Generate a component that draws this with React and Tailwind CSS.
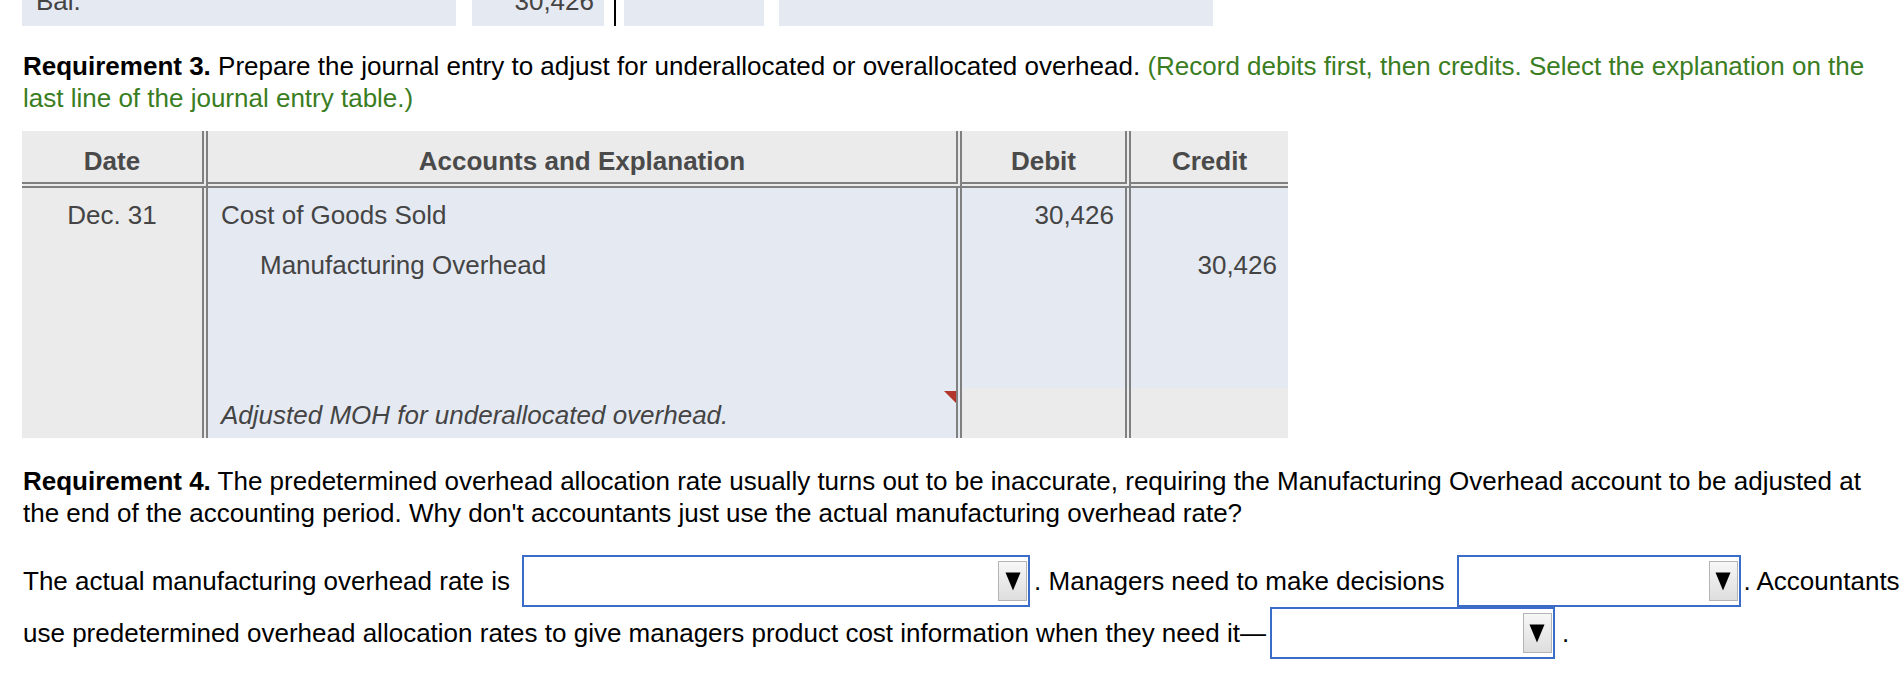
import React from "react";

const Dropdown = ({ width }) => (
  <div
    className={`${width} h-[52px] shrink-0 border-2 border-[#3b6cc7] bg-white flex items-center justify-end pr-[1px]`}
  >
    <div className="w-[29px] h-[40px] border border-[#b4b4b4] bg-gradient-to-b from-[#f7f7f7] to-[#dedede] flex items-center justify-center">
      <svg width="16" height="19" viewBox="0 0 16 19">
        <polygon points="0.5,0.5 15.5,0.5 8,18.5" fill="#000" />
      </svg>
    </div>
  </div>
);

const cellR = "border-r-[6px] border-double border-[#808080]";
const head = "border-b-[6px] border-double border-[#808080] bg-[#ebebeb] h-[57px] pt-[14px] text-center font-bold text-[#4a4a4a]";

const App = () => {
  return (
    <div className="w-[1902px] h-[694px] overflow-hidden bg-white font-['Liberation_Sans',Arial,sans-serif] text-[26px] leading-[32px] text-black">
      {/* previous t-account, cut at the top */}
      <div className="flex -mt-[40px] h-[66px] pl-[22px] text-[#444]">
        <div className="w-[434px] bg-[#e4e9f2] pl-[14px] pt-[25px]">Bal.</div>
        <div className="w-[132px] ml-[16px] bg-[#e4e9f2] text-right pr-[10px] pt-[25px]">30,426</div>
        <div className="w-[2px] ml-[10px] bg-black"></div>
        <div className="w-[140px] ml-[8px] bg-[#e4e9f2]"></div>
        <div className="w-[434px] ml-[15px] bg-[#e4e9f2]"></div>
      </div>

      <p className="mt-[24px] pl-[23px] whitespace-nowrap">
        <span className="font-bold">Requirement 3.</span> Prepare the journal entry to adjust for underallocated or
        overallocated overhead.{" "}
        <span className="text-[#3a7d22]">
          (Record debits first, then credits. Select the explanation on the
          <br />
          last line of the journal entry table.)
        </span>
      </p>

      <div className="mt-[17px] ml-[22px] w-[1266px] grid grid-cols-[186px_754px_169px_157px] text-[#444]">
        <div className={`${cellR} ${head}`}>Date</div>
        <div className={`${cellR} ${head}`}>Accounts and Explanation</div>
        <div className={`${cellR} ${head}`}>Debit</div>
        <div className={head}>Credit</div>

        <div className={`${cellR} row-span-5 bg-[#ebebeb] pt-[11px] text-center`}>Dec. 31</div>

        <div className={`${cellR} h-[50px] bg-[#e4e9f2] pt-[11px] pl-[13px]`}>Cost of Goods Sold</div>
        <div className={`${cellR} h-[50px] bg-[#e4e9f2] pt-[11px] pr-[11px] text-right`}>30,426</div>
        <div className="h-[50px] bg-[#e4e9f2]"></div>

        <div className={`${cellR} h-[50px] bg-[#e4e9f2] pt-[11px] pl-[52px]`}>Manufacturing Overhead</div>
        <div className={`${cellR} h-[50px] bg-[#e4e9f2]`}></div>
        <div className="h-[50px] bg-[#e4e9f2] pt-[11px] pr-[11px] text-right">30,426</div>

        <div className={`${cellR} h-[50px] bg-[#e4e9f2]`}></div>
        <div className={`${cellR} h-[50px] bg-[#e4e9f2]`}></div>
        <div className="h-[50px] bg-[#e4e9f2]"></div>

        <div className={`${cellR} h-[50px] bg-[#e4e9f2]`}></div>
        <div className={`${cellR} h-[50px] bg-[#e4e9f2]`}></div>
        <div className="h-[50px] bg-[#e4e9f2]"></div>

        <div className={`${cellR} relative h-[50px] bg-[#e4e9f2] pt-[11px] pl-[13px] italic`}>
          Adjusted MOH for underallocated overhead.
          <svg className="absolute top-[3px] right-0" width="12" height="12" viewBox="0 0 12 12">
            <polygon points="0,0 12,0 12,12" fill="#b3342a" />
          </svg>
        </div>
        <div className={`${cellR} h-[50px] bg-[#ebebeb]`}></div>
        <div className="h-[50px] bg-[#ebebeb]"></div>
      </div>

      <p className="mt-[27px] pl-[23px] whitespace-nowrap">
        <span className="font-bold">Requirement 4.</span> The predetermined overhead allocation rate usually turns out
        to be inaccurate, requiring the Manufacturing Overhead account to be adjusted at
        <br />
        the end of the accounting period. Why don't accountants just use the actual manufacturing overhead rate?
      </p>

      <div className="mt-[26px] pl-[23px] flex flex-col whitespace-nowrap">
        <div className="flex items-center h-[52px]">
          <span>The actual manufacturing overhead rate is</span>
          <div className="ml-[12px]">
            <Dropdown width="w-[508px]" />
          </div>
          <span className="ml-[4px]">. Managers need to make decisions</span>
          <div className="ml-[12px]">
            <Dropdown width="w-[284px]" />
          </div>
          <span className="ml-[3px]">. Accountants</span>
        </div>
        <div className="flex items-center h-[52px]">
          <span>use predetermined overhead allocation rates to give managers product cost information when they need it—</span>
          <div className="ml-[4px]">
            <Dropdown width="w-[285px]" />
          </div>
          <span className="ml-[7px]">.</span>
        </div>
      </div>
    </div>
  );
};

export default App;
